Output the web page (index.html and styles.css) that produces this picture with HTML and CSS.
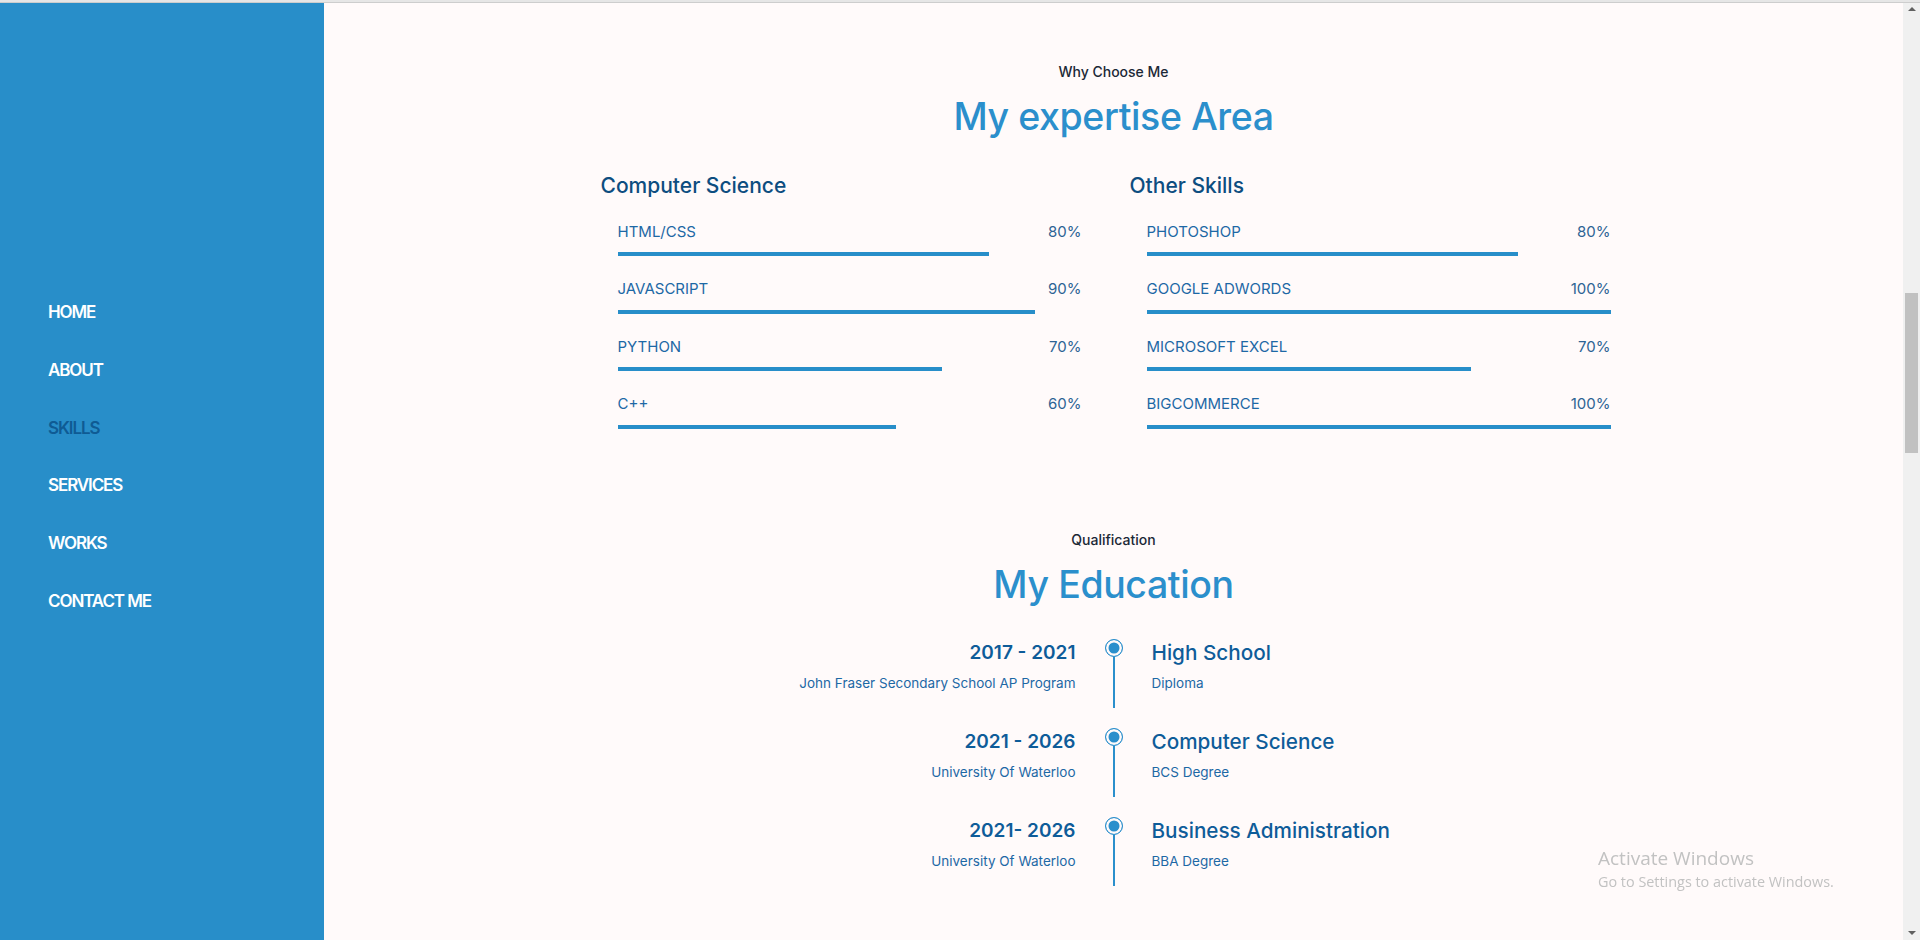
FILE: index.html
```html
<!DOCTYPE html>
<html lang="en">
<head>
<meta charset="utf-8">
<title>Skills</title>
<link rel="stylesheet" href="styles.css">
</head>
<body>
<div class="topline"></div>
<div class="app">
  <nav class="sidebar">
    <ul class="nav">
      <li><a href="#">HOME</a></li>
      <li><a href="#">ABOUT</a></li>
      <li><a href="#" class="active">SKILLS</a></li>
      <li><a href="#">SERVICES</a></li>
      <li><a href="#">WORKS</a></li>
      <li><a href="#">CONTACT ME</a></li>
    </ul>
  </nav>

  <main class="main">
    <section class="section skills">
      <p class="eyebrow">Why Choose Me</p>
      <h2 class="title">My expertise Area</h2>
      <div class="skill-grid">
        <div class="skill-col">
          <h3 class="col-title">Computer Science</h3>
          <div class="skill">
            <div class="skill-head"><span>HTML/CSS</span><span class="pct">80%</span></div>
            <div class="track"><div class="fill" style="width:80%"></div></div>
          </div>
          <div class="skill">
            <div class="skill-head"><span>JAVASCRIPT</span><span class="pct">90%</span></div>
            <div class="track"><div class="fill" style="width:90%"></div></div>
          </div>
          <div class="skill">
            <div class="skill-head"><span>PYTHON</span><span class="pct">70%</span></div>
            <div class="track"><div class="fill" style="width:70%"></div></div>
          </div>
          <div class="skill">
            <div class="skill-head"><span>C++</span><span class="pct">60%</span></div>
            <div class="track"><div class="fill" style="width:60%"></div></div>
          </div>
        </div>
        <div class="skill-col">
          <h3 class="col-title">Other Skills</h3>
          <div class="skill">
            <div class="skill-head"><span>PHOTOSHOP</span><span class="pct">80%</span></div>
            <div class="track"><div class="fill" style="width:80%"></div></div>
          </div>
          <div class="skill">
            <div class="skill-head"><span>GOOGLE ADWORDS</span><span class="pct">100%</span></div>
            <div class="track"><div class="fill" style="width:100%"></div></div>
          </div>
          <div class="skill">
            <div class="skill-head"><span>MICROSOFT EXCEL</span><span class="pct">70%</span></div>
            <div class="track"><div class="fill" style="width:70%"></div></div>
          </div>
          <div class="skill">
            <div class="skill-head"><span>BIGCOMMERCE</span><span class="pct">100%</span></div>
            <div class="track"><div class="fill" style="width:100%"></div></div>
          </div>
        </div>
      </div>
    </section>

    <section class="section education">
      <p class="eyebrow">Qualification</p>
      <h2 class="title">My Education</h2>
      <div class="timeline">
        <div class="tl-row">
          <div class="tl-left">
            <div class="tl-big">2017 - 2021</div>
            <div class="tl-small">John Fraser Secondary School AP Program</div>
          </div>
          <div class="tl-mid"><span class="dot"></span><span class="line"></span></div>
          <div class="tl-right">
            <div class="tl-big tl-name">High School</div>
            <div class="tl-small">Diploma</div>
          </div>
        </div>
        <div class="tl-row">
          <div class="tl-left">
            <div class="tl-big">2021 - 2026</div>
            <div class="tl-small">University Of Waterloo</div>
          </div>
          <div class="tl-mid"><span class="dot"></span><span class="line"></span></div>
          <div class="tl-right">
            <div class="tl-big tl-name">Computer Science</div>
            <div class="tl-small">BCS Degree</div>
          </div>
        </div>
        <div class="tl-row">
          <div class="tl-left">
            <div class="tl-big">2021- 2026</div>
            <div class="tl-small">University Of Waterloo</div>
          </div>
          <div class="tl-mid"><span class="dot"></span><span class="line"></span></div>
          <div class="tl-right">
            <div class="tl-big tl-name">Business Administration</div>
            <div class="tl-small">BBA Degree</div>
          </div>
        </div>
      </div>
    </section>
  </main>

  <div class="scrollbar">
    <span class="arrow arrow-up"></span>
    <div class="thumb"></div>
    <span class="arrow arrow-down"></span>
  </div>
</div>

<div class="activate">
  <div class="activate-title">Activate Windows</div>
  <div class="activate-sub">Go to Settings to activate Windows.</div>
</div>
</body>
</html>
```

FILE: styles.css
```css
* { box-sizing: border-box; }

html, body {
  margin: 0;
  padding: 0;
  height: 940px;
  overflow: hidden;
}

body {
  font-family: Inter, "Noto Sans", "DejaVu Sans", sans-serif;
  background: #fffafa;
  display: flex;
  flex-direction: column;
}

.topline {
  height: 3px;
  background: #e6e6e6;
  border-bottom: 1px solid #cdcdcd;
  flex: none;
}

.app {
  flex: 1;
  display: flex;
  min-height: 0;
}

/* Sidebar */
.sidebar {
  width: 324px;
  flex: none;
  background: #288ec9;
}

.nav {
  list-style: none;
  margin: 0;
  padding: 281px 0 0 48px;
}

.nav li {
  height: 57.8px;
  line-height: 57.8px;
}

.nav a {
  color: #ffffff;
  text-decoration: none;
  font-size: 17px;
  font-weight: 600;
  letter-spacing: -1.1px;
}

.nav a.active {
  color: #0f5b94;
}

/* Main */
.main {
  flex: 1;
  padding-top: 59px;
}

.section {
  width: 1026px;
  margin: 0 auto;
}

.eyebrow {
  margin: 0;
  text-align: center;
  font-size: 14px;
  line-height: 20px;
  font-weight: 500;
  color: #1b2836;
}

.title {
  margin: 12px 0 0;
  text-align: center;
  font-size: 37.5px;
  line-height: 46px;
  font-weight: 500;
  color: #2b8fcc;
  letter-spacing: -0.4px;
}

.skill-grid {
  display: grid;
  grid-template-columns: 1fr 1fr;
  column-gap: 32px;
  margin-top: 32px;
}

.col-title {
  margin: 0 0 19.5px;
  font-size: 21px;
  line-height: 28px;
  font-weight: 500;
  color: #0d4d80;
}

.skill {
  padding: 0 16px 0 17px;
  margin-bottom: 21px;
}

.skill-head {
  display: flex;
  justify-content: space-between;
  font-size: 15px;
  line-height: 23px;
  color: #1d68a5;
}

.pct {
  color: #2d6394;
}

.track {
  margin-top: 9.5px;
  height: 4px;
}

.fill {
  height: 4px;
  background: #288ec9;
}

.education {
  margin-top: 80px;
}

.timeline {
  margin-top: 31px;
}

.tl-row {
  display: grid;
  grid-template-columns: 1fr 76px 1fr;
  min-height: 69px;
  margin-bottom: 20px;
}

.tl-left {
  text-align: right;
}

.tl-mid {
  display: flex;
  flex-direction: column;
  align-items: center;
}

.dot {
  width: 18px;
  height: 18px;
  border-radius: 50%;
  border: 1.5px solid #2b8fcc;
  background: #2b8fcc;
  box-shadow: inset 0 0 0 2.5px #fffafa;
  flex: none;
}

.line {
  flex: 1;
  width: 2px;
  background: #2b8fcc;
}

.tl-big {
  font-size: 19px;
  line-height: 28px;
  font-weight: 600;
  color: #0e5c99;
}

.tl-name {
  font-size: 20.7px;
  font-weight: 500;
}

.tl-small {
  margin-top: 6px;
  font-size: 13.5px;
  line-height: 20px;
  color: #1d68a5;
}

/* Fake scrollbar */
.scrollbar {
  width: 17px;
  flex: none;
  background: #f0f0f0;
  display: flex;
  flex-direction: column;
  align-items: center;
}

.arrow {
  width: 0;
  height: 0;
  border-left: 4px solid transparent;
  border-right: 4px solid transparent;
  flex: none;
}

.arrow-up {
  margin-top: 4px;
  border-bottom: 4px solid #606060;
}

.arrow-down {
  margin-top: auto;
  margin-bottom: 5px;
  border-top: 4px solid #606060;
}

.thumb {
  margin-top: 282px;
  width: 13px;
  height: 160px;
  background: #c1c1c1;
}

/* Windows watermark */
.activate {
  position: fixed;
  left: 1598px;
  top: 846px;
  font-family: "Open Sans", "Noto Sans", sans-serif;
  color: #c2c2c2;
}

.activate-title {
  font-size: 19px;
  line-height: 25px;
}

.activate-sub {
  font-size: 14.4px;
  line-height: 21px;
}
```
